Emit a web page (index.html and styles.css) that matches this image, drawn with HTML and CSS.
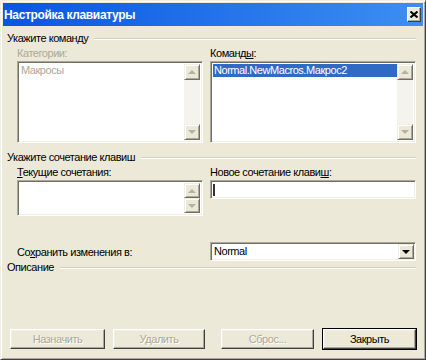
FILE: index.html
```html
<!DOCTYPE html>
<html lang="ru">
<head>
    <meta charset="UTF-8">
    <title>Настройка клавиатуры</title>
    <link rel="stylesheet" href="styles.css">
</head>
<body>
    <div class="window">
        <!-- Заголовок окна -->
        <div class="titlebar">
            <span class="title">Настройка клавиатуры</span>
            <button class="close">
                <svg width="8" height="7" viewBox="0 0 8 7">
                    <path d="M0.5 0.5 L7.5 6.5 M7.5 0.5 L0.5 6.5" stroke="#000" stroke-width="2"/>
                </svg>
            </button>
        </div>

        <div class="content">
            <!-- Укажите команду -->
            <div class="group first">
                <span>Укажите команду</span>
                <div class="rule"></div>
            </div>
            <div class="columns">
                <div class="col left">
                    <div class="label disabled">Категории:</div>
                    <div class="listbox tall">
                        <div class="items">
                            <div class="item disabled">Макросы</div>
                        </div>
                        <div class="scrollbar">
                            <div class="sbtn"><i class="arrow up"></i></div>
                            <div class="track"></div>
                            <div class="sbtn"><i class="arrow down"></i></div>
                        </div>
                    </div>
                </div>
                <div class="col right">
                    <div class="label">Команд<u>ы</u>:</div>
                    <div class="listbox tall">
                        <div class="items">
                            <div class="item selected">Normal.NewMacros.Макрос2</div>
                        </div>
                        <div class="scrollbar">
                            <div class="sbtn"><i class="arrow up"></i></div>
                            <div class="track"></div>
                            <div class="sbtn"><i class="arrow down"></i></div>
                        </div>
                    </div>
                </div>
            </div>

            <!-- Укажите сочетание клавиш -->
            <div class="group">
                <span>Укажите сочетание клавиш</span>
                <div class="rule"></div>
            </div>
            <div class="columns">
                <div class="col left">
                    <div class="label"><u>Т</u>екущие сочетания:</div>
                    <div class="listbox short">
                        <div class="items"></div>
                        <div class="scrollbar">
                            <div class="sbtn"><i class="arrow up"></i></div>
                            <div class="sbtn"><i class="arrow down"></i></div>
                        </div>
                    </div>
                </div>
                <div class="col right">
                    <div class="label">Новое сочетание клави<u>ш</u>:</div>
                    <div class="textbox"><span class="caret"></span></div>
                </div>
            </div>

            <div class="columns save-row">
                <div class="col left">
                    <div class="label">Со<u>х</u>ранить изменения в:</div>
                </div>
                <div class="col right">
                    <div class="combo">
                        <span class="combo-value">Normal</span>
                        <div class="sbtn combo-btn"><i class="arrow down dark"></i></div>
                    </div>
                </div>
            </div>

            <!-- Описание -->
            <div class="group tight">
                <span>Описание</span>
                <div class="rule"></div>
            </div>

            <div class="buttons">
                <button class="btn assign" disabled>Назначить</button>
                <button class="btn remove" disabled>Удалить</button>
                <button class="btn reset" disabled>Сброс...</button>
                <button class="btn default">Закрыть</button>
            </div>
        </div>
    </div>
</body>
</html>
```

FILE: styles.css
```css
body {
    margin: 0;
    font-family: "Liberation Sans", Arial, sans-serif;
    font-size: 11px;
    letter-spacing: -0.45px;
    color: #000;
    background: #ece9d8;
}

.window {
    width: 426px;
    height: 360px;
    box-sizing: border-box;
    background: #ece9d8;
    border: 1px solid;
    border-color: #f1efe2 #404040 #404040 #f1efe2;
    box-shadow: inset 1px 1px #fff, inset -1px -1px #aca899;
    padding: 2px;
    display: flex;
    flex-direction: column;
}

.titlebar {
    height: 23px;
    flex-shrink: 0;
    display: flex;
    justify-content: space-between;
    align-items: center;
    padding: 0 2px 0 1px;
    background: linear-gradient(to right, #0856e2, #3d8ef2);
}

.title {
    color: #fff;
    font-weight: bold;
    font-size: 12px;
    letter-spacing: -0.35px;
}

.close {
    box-sizing: border-box;
    width: 14px;
    height: 15px;
    padding: 0;
    margin: 0;
    display: flex;
    justify-content: center;
    align-items: center;
    background: #ece9d8;
    border: 1px solid;
    border-color: #fff #404040 #404040 #fff;
    box-shadow: inset -1px -1px #aca899;
}

.content {
    flex: 1;
    display: flex;
    flex-direction: column;
    padding: 0 7px 0 4px;
}

.group {
    display: flex;
    align-items: center;
    height: 13px;
    line-height: 13px;
    margin-top: 8px;
}

.group.first {
    margin-top: 6px;
}

.group.tight {
    margin-top: 0;
}

.rule {
    flex: 1;
    margin-left: 6px;
    border-top: 1px solid #d0d0bf;
    border-bottom: 1px solid #fff;
}

.columns {
    display: flex;
    gap: 7px;
    padding-left: 10px;
}

.col.left {
    width: 186px;
}

.col.right {
    width: 206px;
}

.label {
    height: 13px;
    line-height: 13px;
    margin: 2px 0 1px;
}

.label.disabled,
.item.disabled {
    color: #aca899;
}

.listbox,
.textbox,
.combo {
    box-sizing: border-box;
    background: #fff;
    border: 1px solid;
    border-color: #aca899 #fff #fff #aca899;
    box-shadow: inset 1px 1px #716f64, inset -1px -1px #f1efe2;
    padding: 2px;
}

.listbox {
    display: flex;
}

.listbox.tall {
    height: 82px;
}

.listbox.short {
    height: 36px;
}

.items {
    flex: 1;
}

.item {
    height: 13px;
    line-height: 13px;
    padding-left: 1px;
    white-space: nowrap;
}

.item.selected {
    background: #316ac5;
    color: #fff;
}

.scrollbar {
    width: 16px;
    display: flex;
    flex-direction: column;
    justify-content: space-between;
}

.track {
    flex: 1;
    background: #f4f3ee;
}

.sbtn {
    box-sizing: border-box;
    width: 16px;
    height: 16px;
    background: #ece9d8;
    border: 1px solid;
    border-color: #f1efe2 #716f64 #716f64 #f1efe2;
    box-shadow: inset 1px 1px #fff, inset -1px -1px #aca899;
    display: flex;
    justify-content: center;
    align-items: center;
}

.arrow {
    width: 0;
    height: 0;
    border-left: 4px solid transparent;
    border-right: 4px solid transparent;
}

.arrow.up {
    border-bottom: 4px solid #b5b2a2;
}

.arrow.down {
    border-top: 4px solid #b5b2a2;
}

.arrow.down.dark {
    border-top-color: #000;
}

.textbox {
    height: 19px;
    padding: 3px 2px;
}

.caret {
    display: block;
    width: 2px;
    height: 12px;
    background: #333;
}

.save-row {
    margin-top: 26px;
    align-items: center;
}

.combo {
    height: 19px;
    display: flex;
    align-items: center;
    justify-content: space-between;
    padding: 2px 1px 2px 3px;
}

.combo-value {
    line-height: 13px;
}

.combo-btn {
    width: 16px;
    height: 15px;
}

.buttons {
    margin-top: auto;
    margin-bottom: 8px;
    display: flex;
    padding-left: 3px;
}

.btn {
    flex-shrink: 0;
    box-sizing: border-box;
    height: 20px;
    padding: 0;
    font-family: "Liberation Sans", Arial, sans-serif;
    font-size: 11px;
    letter-spacing: -0.45px;
    color: #000;
    background: #ece9d8;
    border: 1px solid;
    border-color: #fff #404040 #404040 #fff;
    box-shadow: inset -1px -1px #aca899, inset 1px 1px #f1efe2;
}

.btn:disabled {
    color: #aca899;
    text-shadow: 1px 1px #fff;
}

.btn.assign {
    width: 95px;
}

.btn.remove {
    width: 92px;
    margin-left: 8px;
}

.btn.reset {
    width: 93px;
    margin-left: 16px;
}

.btn.default {
    width: 93px;
    margin-left: 9px;
    outline: 1px solid #000;
}
```
